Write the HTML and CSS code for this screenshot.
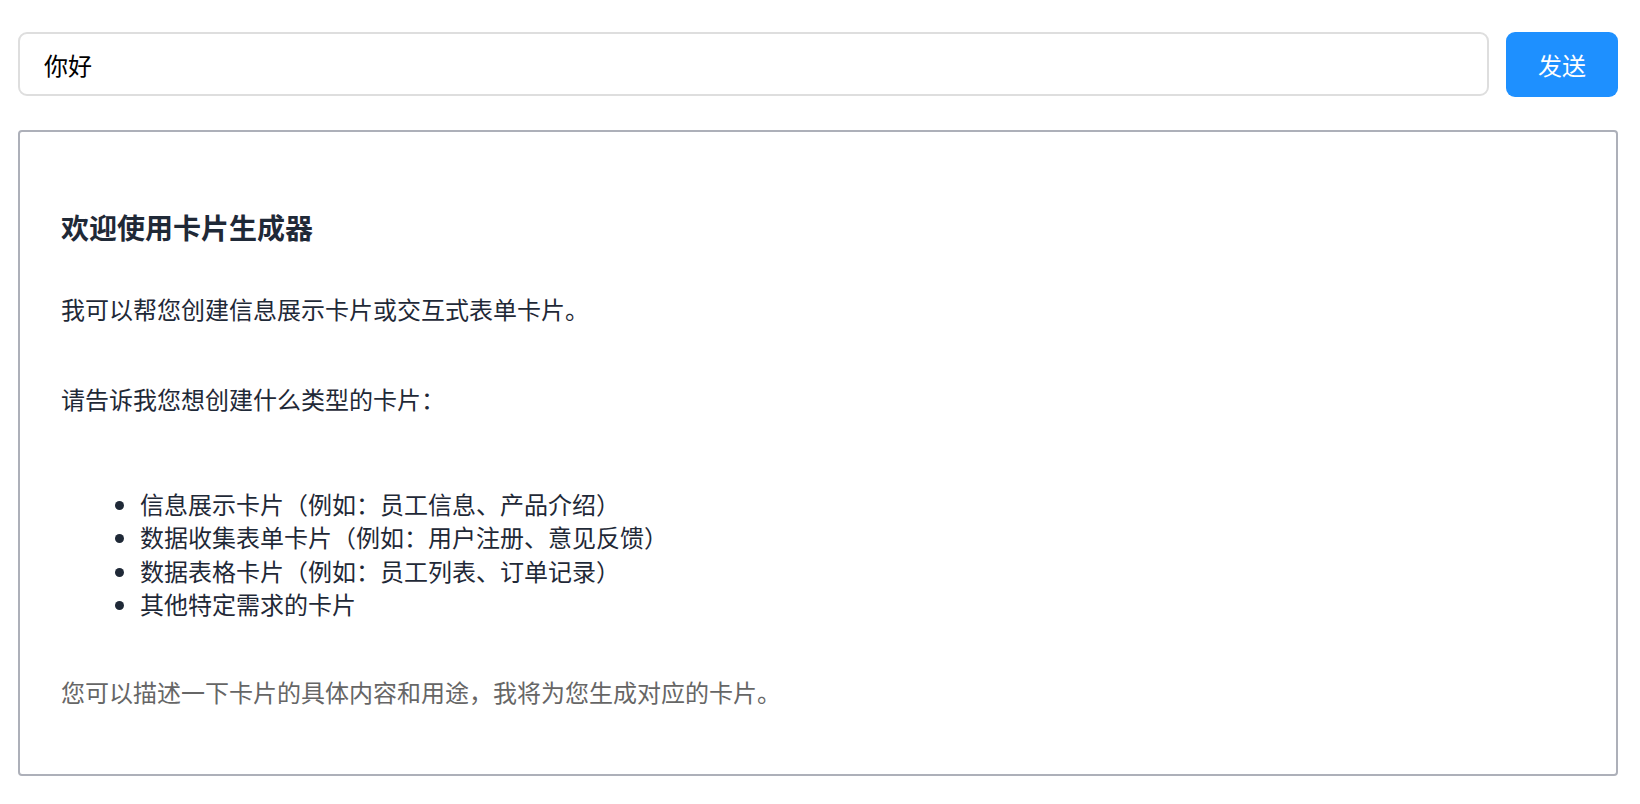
FILE: index.html
```html
<!DOCTYPE html>
<html lang="zh-CN">
<head>
<meta charset="utf-8">
<title>卡片生成器</title>
<link rel="stylesheet" href="styles.css">
</head>
<body>
<div class="page">
  <div class="input-row">
    <input class="chat-input" type="text" value="你好">
    <button class="send-btn" type="button">发送</button>
  </div>
  <div class="card">
    <h3 class="card-title">欢迎使用卡片生成器</h3>
    <p class="text p1">我可以帮您创建信息展示卡片或交互式表单卡片。</p>
    <p class="text p2">请告诉我您想创建什么类型的卡片：</p>
    <ul class="list">
      <li>信息展示卡片（例如：员工信息、产品介绍）</li>
      <li>数据收集表单卡片（例如：用户注册、意见反馈）</li>
      <li>数据表格卡片（例如：员工列表、订单记录）</li>
      <li>其他特定需求的卡片</li>
    </ul>
    <p class="text note">您可以描述一下卡片的具体内容和用途，我将为您生成对应的卡片。</p>
  </div>
</div>
</body>
</html>
```

FILE: styles.css
```css
html, body {
  margin: 0;
  padding: 0;
  background: #ffffff;
}

body {
  font-family: "Noto Sans CJK SC", "Noto Sans", sans-serif;
  color: #1f2937;
}

.page {
  padding: 32px 22px 0 18px;
}

.input-row {
  display: flex;
  gap: 17px;
  height: 64px;
}

.chat-input {
  flex: 1;
  box-sizing: border-box;
  height: 64px;
  border: 2px solid #dedede;
  border-radius: 9px;
  padding: 0 24px;
  font-family: "Noto Sans CJK SC", sans-serif;
  font-size: 24px;
  color: #000000;
  background: #ffffff;
  outline: none;
}

.send-btn {
  width: 112px;
  height: 65px;
  border: none;
  border-radius: 9px;
  background: #1e90ff;
  color: #ffffff;
  font-family: "Noto Sans CJK SC", sans-serif;
  font-size: 24px;
  padding: 0;
}

.card {
  margin-top: 34px;
  border: 2px solid #adb0b9;
  border-radius: 4px;
  padding: 0 0 65px 41px;
}

.card-title {
  margin: 76px 0 0;
  font-size: 28px;
  line-height: 38px;
  font-weight: 700;
  color: #1f2937;
}

.text {
  margin: 0;
  font-size: 24px;
  line-height: 33.6px;
  color: #1f2937;
}

.p1 {
  margin-top: 46px;
}

.p2 {
  margin-top: 56px;
}

.list {
  margin: 72px 0 0;
  padding-left: 79px;
  font-size: 24px;
  line-height: 33.3px;
  color: #1f2937;
}

.note {
  margin-top: 55px;
  color: #666666;
}
```
